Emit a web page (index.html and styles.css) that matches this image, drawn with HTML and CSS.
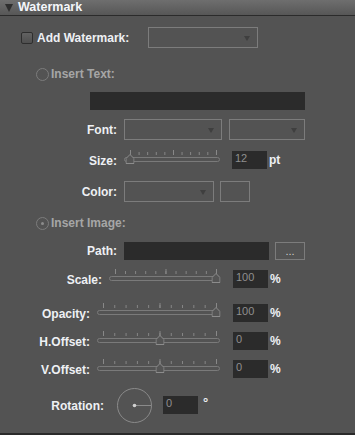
FILE: index.html
```html
<!DOCTYPE html>
<html lang="en">
<head>
  <meta charset="UTF-8">
  <title>Watermark</title>
  <link rel="stylesheet" href="styles.css">
</head>
<body>
  <div class="panel">
    <div class="panel-head"><span class="twisty"></span>Watermark</div>

    <div class="row row-add">
      <span class="checkbox"></span>
      <span class="lbl-add">Add Watermark:</span>
      <div class="select sel-type"></div>
    </div>

    <div class="row row-radio radio-text">
      <span class="radio"></span>
      <span class="dim">Insert Text:</span>
    </div>

    <div class="field field-text"></div>

    <div class="row row-font">
      <span class="lbl lbl-a">Font:</span>
      <div class="select sel-font"></div>
      <div class="select sel-style"></div>
    </div>

    <div class="row row-slider row-size">
      <span class="lbl lbl-a">Size:</span>
      <div class="slider slider-size">
        <div class="track"></div>
        <div class="scale">
          <div class="ticks"></div>
          <svg class="thumb" style="left: 0%" viewBox="0 0 9 10"><path d="M.5 9.5V4.5L4.5 .5L8.5 4.5V9.5Z"/></svg>
        </div>
      </div>
      <div class="num num-size">12</div>
      <span class="unit">pt</span>
    </div>

    <div class="row row-color">
      <span class="lbl lbl-a">Color:</span>
      <div class="select sel-color"></div>
      <div class="swatch"></div>
    </div>

    <div class="row row-radio radio-image">
      <span class="radio checked"></span>
      <span class="dim">Insert Image:</span>
    </div>

    <div class="row row-path">
      <span class="lbl lbl-a">Path:</span>
      <div class="field field-path"></div>
      <div class="browse">...</div>
    </div>

    <div class="row row-slider row-scale">
      <span class="lbl lbl-b">Scale:</span>
      <div class="slider slider-scale">
        <div class="track"></div>
        <div class="scale">
          <div class="ticks"></div>
          <svg class="thumb" style="left: 100%" viewBox="0 0 9 10"><path d="M.5 9.5V4.5L4.5 .5L8.5 4.5V9.5Z"/></svg>
        </div>
      </div>
      <div class="num">100</div>
      <span class="unit">%</span>
    </div>

    <div class="row row-slider row-opacity">
      <span class="lbl lbl-c">Opacity:</span>
      <div class="slider slider-wide">
        <div class="track"></div>
        <div class="scale">
          <div class="ticks"></div>
          <svg class="thumb" style="left: 100%" viewBox="0 0 9 10"><path d="M.5 9.5V4.5L4.5 .5L8.5 4.5V9.5Z"/></svg>
        </div>
      </div>
      <div class="num">100</div>
      <span class="unit">%</span>
    </div>

    <div class="row row-slider row-offset">
      <span class="lbl lbl-c">H.Offset:</span>
      <div class="slider slider-wide">
        <div class="track"></div>
        <div class="scale">
          <div class="ticks"></div>
          <svg class="thumb" style="left: 50%" viewBox="0 0 9 10"><path d="M.5 9.5V4.5L4.5 .5L8.5 4.5V9.5Z"/></svg>
        </div>
      </div>
      <div class="num">0</div>
      <span class="unit">%</span>
    </div>

    <div class="row row-slider row-offset">
      <span class="lbl lbl-c">V.Offset:</span>
      <div class="slider slider-wide">
        <div class="track"></div>
        <div class="scale">
          <div class="ticks"></div>
          <svg class="thumb" style="left: 50%" viewBox="0 0 9 10"><path d="M.5 9.5V4.5L4.5 .5L8.5 4.5V9.5Z"/></svg>
        </div>
      </div>
      <div class="num">0</div>
      <span class="unit">%</span>
    </div>

    <div class="row row-rotation">
      <span class="lbl lbl-d">Rotation:</span>
      <svg class="dial" width="36" height="36" viewBox="0 0 36 36">
        <circle cx="17.5" cy="17.5" r="17" fill="none" stroke="#8a8a8a"/>
        <line x1="17.5" y1="17.5" x2="34.5" y2="17.5" stroke="#8a8a8a"/>
        <circle cx="17.5" cy="17.5" r="1.8" fill="#d0d0d0"/>
      </svg>
      <div class="num num-rot">0</div>
      <span class="deg">&deg;</span>
    </div>
  </div>
</body>
</html>
```

FILE: styles.css
```css
body {
  margin: 0;
  background-color: #535353;
  font-family: 'Liberation Sans', Arial, sans-serif;
  font-size: 12px;
  color: #eef0f4;
}

.panel {
  width: 355px;
  height: 435px;
  box-sizing: border-box;
  background-color: #535353;
  border-bottom: 2px solid #2a2a2a;
  overflow: hidden;
}

.panel-head {
  height: 15px;
  border-bottom: 1px solid #2b2b2b;
  background: linear-gradient(#6e6e6e, #575757);
  display: flex;
  align-items: center;
  font-weight: bold;
  font-size: 12.5px;
  line-height: 15px;
  color: #f4f6fa;
}

.twisty {
  width: 0;
  height: 0;
  margin: 1px 5px 0 5px;
  border-left: 4.5px solid transparent;
  border-right: 4.5px solid transparent;
  border-top: 8px solid #2e2e2e;
}

.row {
  display: flex;
  align-items: center;
}

.lbl {
  font-weight: bold;
  text-align: right;
  flex: none;
}

.lbl-a { width: 117px; margin-right: 7px; }
.lbl-b { width: 102px; margin-right: 7px; }
.lbl-c { width: 90px; margin-right: 7px; }
.lbl-d { width: 104px; margin-right: 13px; }

/* add watermark */
.row-add {
  margin-top: 11px;
  height: 21px;
  padding-left: 21px;
}

.checkbox {
  width: 10px;
  height: 10px;
  border: 1px solid #2e2e2e;
  border-radius: 2px;
  background: linear-gradient(#626262, #4f4f4f);
  margin-right: 4px;
  margin-top: 1px;
}

.lbl-add {
  font-weight: bold;
  width: 111px;
}

/* selects */
.select {
  position: relative;
  box-sizing: border-box;
  height: 21px;
  border: 1px solid #7c7c7c;
  flex: none;
}

.select::after {
  content: '';
  position: absolute;
  right: 7px;
  top: 8px;
  border-left: 3.5px solid transparent;
  border-right: 3.5px solid transparent;
  border-top: 5px solid #3f3f3f;
}

.sel-type { width: 110px; }
.sel-font { width: 98px; margin-right: 7px; }
.sel-style { width: 76px; }
.sel-color { width: 90px; margin-right: 6px; }

.swatch {
  box-sizing: border-box;
  width: 30px;
  height: 21px;
  border: 1px solid #7c7c7c;
}

/* radios */
.row-radio {
  height: 16px;
  padding-left: 36px;
}

.radio-text { margin-top: 18px; }
.radio-image { margin-top: 13px; }

.radio {
  position: relative;
  box-sizing: border-box;
  width: 13px;
  height: 13px;
  border: 1px solid #7c7c7c;
  border-radius: 50%;
  margin-right: 2px;
}

.radio.checked::after {
  content: '';
  position: absolute;
  left: 4px;
  top: 4px;
  width: 3px;
  height: 3px;
  border-radius: 50%;
  background-color: #8c8c8c;
}

.dim {
  font-weight: bold;
  color: #a6a6a6;
}

/* text fields */
.field {
  background-color: #2b2b2b;
  height: 18px;
}

.field-text {
  margin: 10px 0 0 90px;
  width: 215px;
}

.row-font {
  margin-top: 9px;
  height: 21px;
}

.row-color {
  margin-top: 12px;
  height: 21px;
}

.row-path {
  margin-top: 11px;
  height: 18px;
}

.field-path {
  width: 145px;
  margin-right: 6px;
}

.browse {
  box-sizing: border-box;
  width: 30px;
  height: 18px;
  border: 1px solid #7c7c7c;
  color: #cfcfcf;
  font-size: 11px;
  line-height: 16px;
  text-align: center;
}

/* sliders */
.row-slider {
  align-items: flex-start;
  height: 19px;
}

.row-slider .lbl {
  line-height: 14px;
  margin-top: 4px;
}

.row-size { margin-top: 10px; }
.row-scale { margin-top: 9px; }
.row-opacity { margin-top: 15px; }
.row-offset { margin-top: 9px; }

.slider {
  position: relative;
  height: 19px;
  flex: none;
}

.slider-size { width: 96px; margin-right: 12px; }
.slider-scale { width: 111px; margin-right: 13px; }
.slider-wide { width: 123px; margin-right: 13px; }

.track {
  position: absolute;
  left: 0;
  right: 0;
  top: 7px;
  height: 3px;
  border: 1px solid #7a7a7a;
  border-radius: 3px;
}

.scale {
  position: absolute;
  left: 6px;
  right: 4px;
  top: 0;
  bottom: 0;
}

.ticks {
  position: absolute;
  left: 0;
  right: -1px;
  top: 0;
  height: 5px;
  background-image:
    linear-gradient(to right, #888888 1px, transparent 1px),
    linear-gradient(to right, #888888 1px, transparent 1px);
  background-size: 10% 3px, 50% 5px;
  background-position: left bottom, left bottom;
  background-repeat: repeat-x;
  border-right: 1px solid #888888;
  box-sizing: border-box;
}

.thumb {
  position: absolute;
  top: 4px;
  width: 9px;
  height: 10px;
  transform: translateX(-4.5px);
}

.thumb path {
  fill: #555555;
  stroke: #8c8c8c;
}

.num {
  box-sizing: border-box;
  width: 35px;
  height: 18px;
  margin-top: 1px;
  padding: 1px 0 0 3px;
  background-color: #2b2b2b;
  color: #8f8f8f;
  font-size: 11px;
  line-height: 13px;
  flex: none;
}

.unit {
  font-weight: bold;
  margin: 3px 0 0 2px;
  line-height: 14px;
}

.num-size { margin-top: 1px; }

/* rotation */
.row-rotation {
  margin-top: 10px;
  height: 36px;
  align-items: flex-start;
}

.row-rotation .lbl {
  margin-top: 11px;
  line-height: 14px;
}

.dial {
  flex: none;
  margin-right: 10px;
}

.num-rot {
  margin-top: 8px;
}

.deg {
  font-weight: bold;
  margin: 8px 0 0 5px;
  font-size: 13px;
  line-height: 14px;
}
```
